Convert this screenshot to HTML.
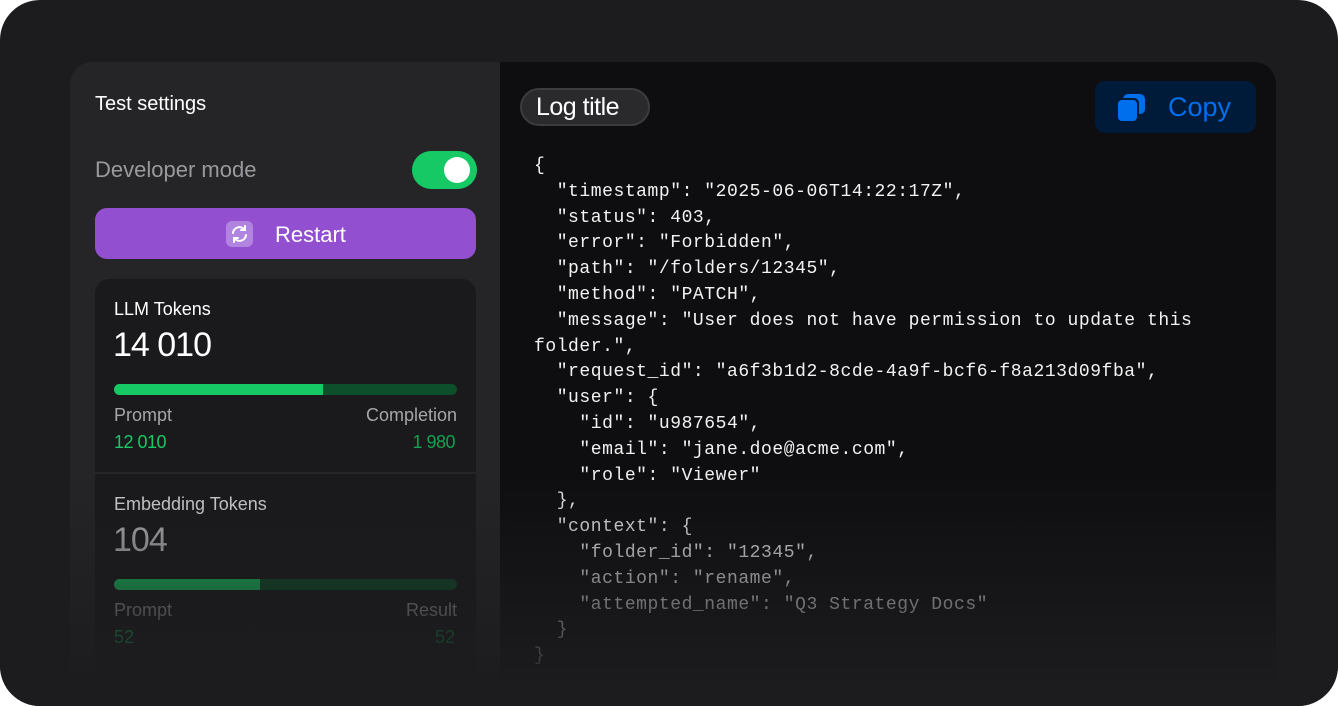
<!DOCTYPE html>
<html><head><style>
*{margin:0;padding:0;box-sizing:border-box}
body{width:1338px;height:706px;background:#fff;overflow:hidden;font-family:"Liberation Sans",sans-serif}
.frame{position:absolute;left:0;top:0;width:1338px;height:706px;background:#1c1c1e;border-radius:40px;overflow:hidden}
.left{position:absolute;left:70px;top:62px;width:430px;height:644px;background:#252527;border-radius:22px 0 0 0}
.right{position:absolute;left:500px;top:62px;width:776px;height:644px;background:#0e0e10;border-radius:0 22px 0 0}
.t{position:absolute;white-space:nowrap}
.card{position:absolute;left:95px;top:279px;width:381px;height:400px;background:#1a1a1c;border-radius:14px}
.bar{position:absolute;height:11px;border-radius:6px;overflow:hidden}
pre{position:absolute;left:534px;top:154px;font-family:"Liberation Mono",monospace;font-size:18px;line-height:25.8px;color:#f2f2f2;letter-spacing:0.55px}
.fade{position:absolute;left:0;top:470px;width:1338px;height:236px;background:linear-gradient(to bottom,rgba(28,28,30,0),rgba(28,28,30,0.7) 65%,#1c1c1e 93%)}
</style></head><body>
<div class="frame">
<div class="left"></div>
<div class="right"></div>
<div class="t" style="left:95px;top:93px;font-size:20px;color:#fff">Test settings</div>
<div class="t" style="left:95px;top:157px;font-size:22px;color:#9a9a9e">Developer mode</div>
<div style="position:absolute;left:412px;top:151px;width:65px;height:38px;border-radius:19px;background:#17c964"></div>
<div style="position:absolute;left:444px;top:157px;width:26px;height:26px;border-radius:13px;background:#fff"></div>
<div style="position:absolute;left:95px;top:208px;width:381px;height:51px;border-radius:12px;background:#9250d0"></div>
<div style="position:absolute;left:226px;top:221px;width:27px;height:26px;border-radius:6px;background:#b184e0"></div>
<svg style="position:absolute;left:229px;top:224px" width="21" height="20" viewBox="0 0 21 20" fill="none" stroke="#fff" stroke-width="2" stroke-linecap="round"><path d="M4 9a6.5 6.5 0 0 1 11.5-3.5M17 11a6.5 6.5 0 0 1-11.5 3.5"/><path d="M16 2v4h-4M5 18v-4h4"/></svg>
<div class="t" style="left:275px;top:222px;font-size:22px;color:#fff">Restart</div>
<div class="card"></div>
<div style="position:absolute;left:95px;top:472px;width:381px;height:2px;background:#252527"></div>
<div class="t" style="left:114px;top:299px;font-size:18px;color:#fff">LLM Tokens</div>
<div class="t" style="left:113px;top:326px;font-size:34px;color:#fff;letter-spacing:-1px">14 010</div>
<div class="bar" style="left:114px;top:384px;width:343px;background:#0d4f2a"><div style="width:209px;height:11px;background:#17c964"></div></div>
<div class="t" style="left:114px;top:405px;font-size:18px;color:#a6a6aa">Prompt</div>
<div class="t" style="right:881px;top:405px;font-size:18px;color:#a6a6aa">Completion</div>
<div class="t" style="left:114px;top:432px;font-size:18px;color:#17c964;letter-spacing:-0.5px">12 010</div>
<div class="t" style="right:883px;top:432px;font-size:18px;color:#12a150;letter-spacing:-0.5px">1 980</div>
<div class="t" style="left:114px;top:494px;font-size:18px;color:#ddd">Embedding Tokens</div>
<div class="t" style="left:113px;top:521px;font-size:34px;color:#bbb;letter-spacing:-1px">104</div>
<div class="bar" style="left:114px;top:579px;width:343px;background:#0d4f2a"><div style="width:146px;height:11px;background:#17c964"></div></div>
<div class="t" style="left:114px;top:600px;font-size:18px;color:#a6a6aa">Prompt</div>
<div class="t" style="right:881px;top:600px;font-size:18px;color:#a6a6aa">Result</div>
<div class="t" style="left:114px;top:627px;font-size:18px;color:#17c964">52</div>
<div class="t" style="right:883px;top:627px;font-size:18px;color:#12a150">52</div>
<div style="position:absolute;left:520px;top:88px;width:130px;height:38px;border-radius:19px;background:#2a2a2d;border:2px solid #3c3c40"></div>
<div class="t" style="left:536px;top:93px;font-size:25px;color:#fff;letter-spacing:-0.5px">Log title</div>
<div style="position:absolute;left:1095px;top:81px;width:161px;height:52px;border-radius:10px;background:#001a3a"></div>
<svg style="position:absolute;left:1116px;top:92px" width="32" height="32" viewBox="0 0 32 32">
<rect x="7" y="2" width="22" height="20" rx="5" fill="#006fee"/>
<rect x="0" y="6" width="23" height="25" rx="5" fill="#001a3a"/>
<rect x="2" y="8" width="19" height="21" rx="4" fill="#006fee"/>
</svg>
<div class="t" style="left:1168px;top:92px;font-size:27px;color:#006fee">Copy</div>
<pre>{
  "timestamp": "2025-06-06T14:22:17Z",
  "status": 403,
  "error": "Forbidden",
  "path": "/folders/12345",
  "method": "PATCH",
  "message": "User does not have permission to update this
folder.",
  "request_id": "a6f3b1d2-8cde-4a9f-bcf6-f8a213d09fba",
  "user": {
    "id": "u987654",
    "email": "jane.doe@acme.com",
    "role": "Viewer"
  },
  "context": {
    "folder_id": "12345",
    "action": "rename",
    "attempted_name": "Q3 Strategy Docs"
  }
}</pre>
<div class="fade"></div>
</div>
</body></html>
